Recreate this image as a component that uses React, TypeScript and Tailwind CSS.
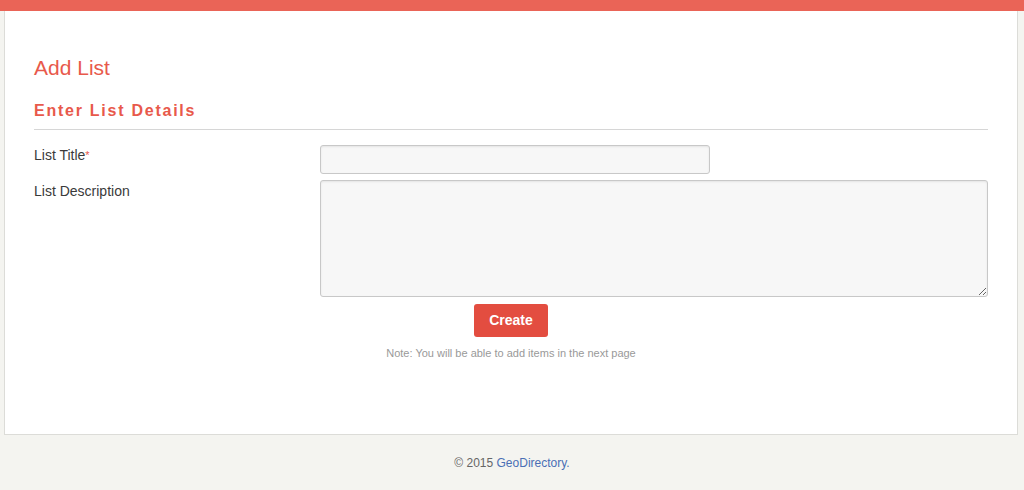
import React from "react";

export default function App() {
  return (
    <div className="min-h-[490px] bg-[#f4f4f0] font-['Liberation_Sans',Arial,sans-serif]">
      <div className="h-[11px] bg-[#ea6457]" />
      <div className="ml-[4px] mr-[6px] border-x border-b border-[#dcdcd8] bg-white px-[29px] pt-[45px] pb-[74px]">
        <h1 className="text-[21px] leading-[24px] text-[#e8594b]">Add List</h1>
        <h2 className="mt-[21px] text-[16px] font-bold leading-[20px] tracking-[1.75px] text-[#e8594b]">
          Enter List Details
        </h2>
        <div className="mt-[8px] h-px bg-[#d6d6d6]" />
        <div className="mt-[15px] flex">
          <label className="w-[286px] pt-[2px] text-[14px] leading-[16px] text-[#3a3a3a]">
            List Title<span className="text-[#e8594b] text-[11px] align-top">*</span>
          </label>
          <input className="h-[29px] w-[390px] rounded-[3px] border border-[#c8c8c8] bg-[#f7f7f7] shadow-[inset_0_1px_2px_rgba(0,0,0,0.08)] outline-none" />
        </div>
        <div className="mt-[6px] flex">
          <label className="w-[286px] pt-[3px] text-[14px] leading-[16px] text-[#3a3a3a]">List Description</label>
          <textarea className="h-[117px] flex-1 rounded-[3px] border border-[#c8c8c8] bg-[#f7f7f7] shadow-[inset_0_1px_2px_rgba(0,0,0,0.08)] outline-none" />
        </div>
        <div className="mt-[7px] flex flex-col items-center">
          <button className="h-[33px] w-[74px] rounded-[3px] bg-[#e34d40] text-[14px] font-bold text-white">
            Create
          </button>
          <p className="mt-[10px] text-[11px] leading-[13px] text-[#999]">
            Note: You will be able to add items in the next page
          </p>
        </div>
      </div>
      <div className="pt-[21px] text-center text-[12px] leading-[14px] text-[#666]">
        © 2015 <span className="text-[#4a6fb5]">GeoDirectory.</span>
      </div>
    </div>
  );
}
